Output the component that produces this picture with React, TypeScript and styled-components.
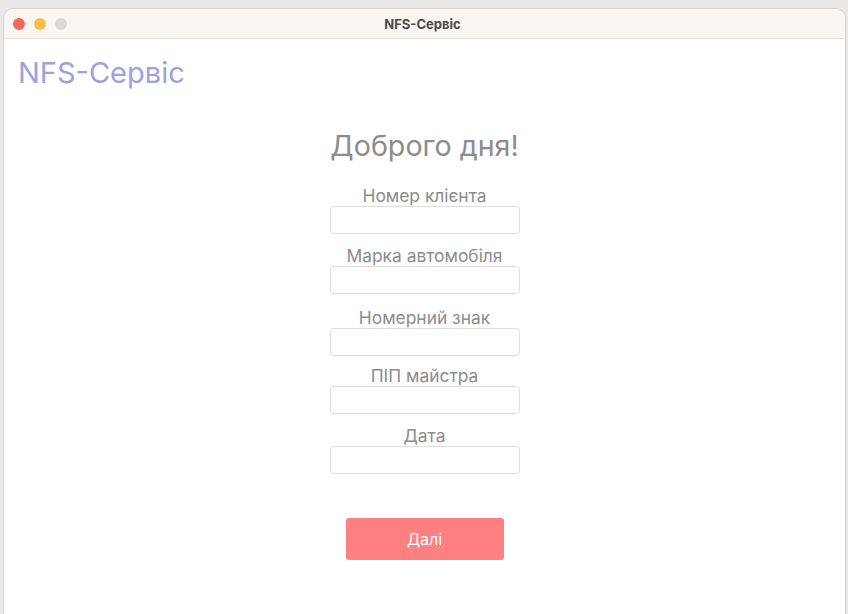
import React from "react";
import styled, { createGlobalStyle } from "styled-components";

const Global = createGlobalStyle`
  html, body { margin: 0; padding: 0; background: #e9e9e9; overflow: hidden; }
  body { font-family: Inter, "Noto Sans", "Liberation Sans", sans-serif; }
`;

const Desktop = styled.div`
  height: 614px;
  padding: 8px 2px 0 3px;
  box-sizing: border-box;
  display: flex;
`;

const Window = styled.div`
  flex: 1;
  display: flex;
  flex-direction: column;
  background: #ffffff;
  border: 1px solid #d2d2d2;
  border-bottom: none;
  border-radius: 10px 10px 0 0;
  overflow: hidden;
`;

const TitleBar = styled.div`
  height: 29px;
  flex: none;
  background: #faf6f2;
  border-bottom: 1px solid #e4e2e0;
  display: flex;
  align-items: center;
  position: relative;
`;

const Lights = styled.div`
  display: flex;
  gap: 9px;
  padding-left: 9px;
`;

const Light = styled.span<{ $c: string }>`
  width: 12px;
  height: 12px;
  border-radius: 50%;
  background: ${(p) => p.$c};
`;

const Title = styled.div`
  position: absolute;
  left: 0;
  right: 0;
  text-align: center;
  font-size: 13px;
  font-weight: 700;
  color: #4b4b4b;
  padding-right: 4px;
`;

const Content = styled.div`
  flex: 1;
  padding: 14px 14px 0;
  display: flex;
  flex-direction: column;
`;

const Brand = styled.div`
  font-size: 29px;
  color: #9aa3dc;
  line-height: 40px;
`;

const Form = styled.div`
  display: flex;
  flex-direction: column;
  align-items: center;
  margin-top: 35px;
`;

const Heading = styled.h1`
  margin: 0 0 21px;
  font-size: 28.6px;
  font-weight: 400;
  color: #8c8c8c;
  line-height: 36px;
`;

const Field = styled.div<{ $gap?: number }>`
  display: flex;
  flex-direction: column;
  align-items: center;
  height: 60px;
  margin-top: ${(p) => p.$gap ?? 0}px;
`;

const Label = styled.label`
  font-size: 17.4px;
  color: #8c8c8c;
  line-height: 21px;
`;

const Input = styled.input`
  width: 190px;
  height: 28px;
  box-sizing: border-box;
  border: 1px solid #dedede;
  border-radius: 4px;
  background: #fff;
  outline: none;
`;

const Button = styled.button`
  margin-top: 33px;
  width: 158px;
  height: 42px;
  border: none;
  border-radius: 3px;
  background: #ff8080;
  color: #fff;
  font-family: inherit;
  font-size: 16px;
`;

const fields: { label: string; gap: number }[] = [
  { label: "Номер клієнта", gap: 0 },
  { label: "Марка автомобіля", gap: 0 },
  { label: "Номерний знак", gap: 2 },
  { label: "ПІП майстра", gap: -2 },
  { label: "Дата", gap: 0 },
];

export default function App() {
  return (
    <>
      <Global />
      <Desktop>
        <Window>
          <TitleBar>
            <Lights>
              <Light $c="#ed6a5e" />
              <Light $c="#f5bf4f" />
              <Light $c="#dcd8d5" />
            </Lights>
            <Title>NFS-Сервіс</Title>
          </TitleBar>
          <Content>
            <Brand>NFS-Сервіс</Brand>
            <Form>
              <Heading>Доброго дня!</Heading>
              {fields.map((f) => (
                <Field key={f.label} $gap={f.gap}>
                  <Label>{f.label}</Label>
                  <Input />
                </Field>
              ))}
              <Button>Далі</Button>
            </Form>
          </Content>
        </Window>
      </Desktop>
    </>
  );
}
